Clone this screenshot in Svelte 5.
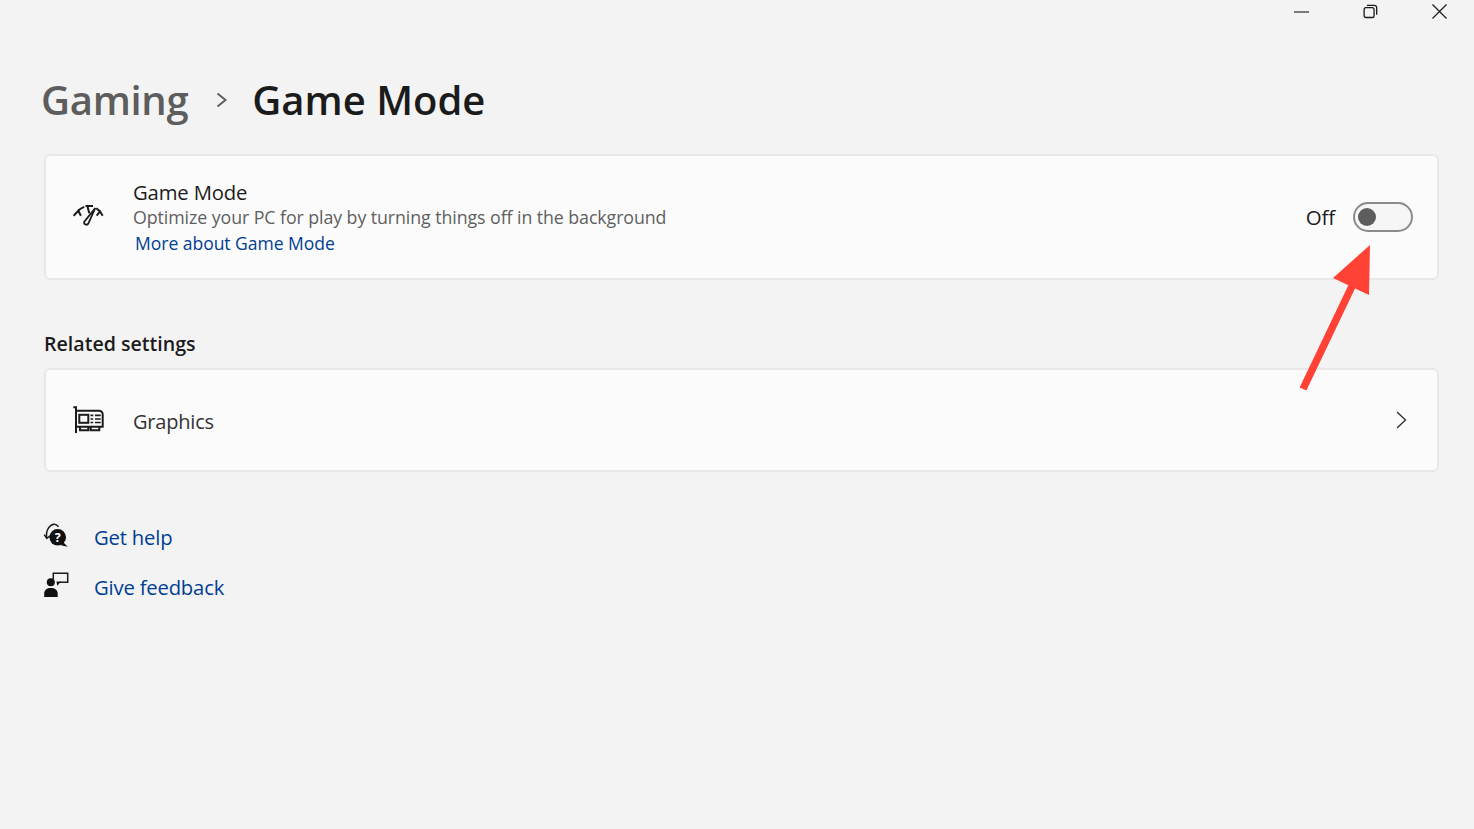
<script>
  const stroke = '#1b1b1b';
</script>

<div class="page">
  <div class="titlebar">
    <button class="win" aria-label="Minimize">
      <svg width="15" height="2" viewBox="0 0 16 2"><path d="M0 1H16" stroke={stroke} stroke-width="1.2"/></svg>
    </button>
    <button class="win" aria-label="Restore">
      <svg width="15" height="15" viewBox="0 0 16 16" fill="none" stroke={stroke} stroke-width="1.400"><rect x="1.200" y="3.800" width="10.600" height="10.600" rx="2"/><path d="M4.200 1.400H12a2.600 2.600 0 0 1 2.600 2.600V11.400"/></svg>
    </button>
    <button class="win" aria-label="Close">
      <svg width="15" height="15" viewBox="0 0 16 16" fill="none" stroke={stroke} stroke-width="1.300"><path d="M.5.5 15.500 15.500M15.500.5.5 15.500"/></svg>
    </button>
  </div>

  <header class="crumbs">
    <span class="parent">Gaming</span>
    <svg class="sep" width="11" height="16" viewBox="0 0 11 16" fill="none" stroke="#5d5d5d" stroke-width="2"><path d="M1.500 1.500 9.500 8 1.500 14.500"/></svg>
    <h1>Game Mode</h1>
  </header>

  <section class="card game">
    <svg class="icon" width="32" height="24" viewBox="0 0 32 24" fill="none" stroke={stroke} stroke-width="2">
      <path d="M.6 12.700 5.300 7.700 7.900 12.700"/>
      <path d="M5.300 7.500C7 5.800 9 4.700 11.300 3.900"/>
      <path d="M12.500 3H20"/>
      <path d="M14.500 3.400 16.300 10.300"/>
      <path d="M23.700 12.700 27 8.500 29.700 12.700"/>
      <path d="M23.300 5.200 27 8.500"/>
      <path d="M22.300 5 15.300 20.500A2.200 2.200 0 0 1 11.300 18.700Z" stroke-width="1.800"/>
    </svg>
    <div class="text">
      <div class="name">Game Mode</div>
      <div class="desc">Optimize your PC for play by turning things off in the background</div>
      <a class="more" href="#more">More about Game Mode</a>
    </div>
    <span class="state">Off</span>
    <span class="toggle"><span class="knob"></span></span>
  </section>

  <h2>Related settings</h2>

  <section class="card graphics">
    <svg class="icon" width="32" height="28" viewBox="0 0 32 28" fill="none" stroke={stroke} stroke-width="2">
      <path d="M.3 2.300H3V28"/>
      <path d="M3 5.700H26A3.700 3.700 0 0 1 29.700 9.400V21.700H3"/>
      <rect x="6.300" y="9.800" width="9" height="8"/>
      <path d="M7 21.700V25.300H15.300V21.700M17.700 21.700V25.300H26.300V21.700"/>
      <path d="M17.500 10.300H20.300M22 10.300H27.700M17.500 14H20.300M22 14H27.700M17.500 17.500H20.300M22 17.500H27.700" stroke-width="1.700"/>
    </svg>
    <span class="label">Graphics</span>
    <svg class="chev" width="11" height="18" viewBox="0 0 11 18" fill="none" stroke="#333" stroke-width="1.400"><path d="M1 1 9.500 9 1 17"/></svg>
  </section>

  <div class="links">
    <div class="link">
      <svg class="over" width="25" height="26" viewBox="0 0 25 26" fill="none">
        <path d="M2.700 14C1.500 6 6 .4 10 .2C12 .1 13.300 1 14.500 2.700" stroke={stroke} stroke-width="1.500"/>
        <path d="M.2 10.700 2.800 14.500 6 11.700" stroke={stroke} stroke-width="1.500"/>
        <circle cx="13.700" cy="13.300" r="8.300" fill="#111"/>
        <path d="M19 18 23.700 22.700 17 21.200Z" fill="#111"/>
        <text x="13.700" y="17.800" text-anchor="middle" class="q">?</text>
      </svg>
      <a href="#help">Get help</a>
    </div>
    <div class="link">
      <svg class="over" width="25" height="26" viewBox="0 0 25 26" fill="none">
        <circle cx="6.800" cy="8.300" r="4" fill="#111"/>
        <path d="M.2 23V19.500C.2 16 3 14 6.800 14C10.800 14 13.700 16 13.700 19.500V23Z" fill="#111"/>
        <path d="M9.300 5V-.7H23.700V8.300H16" stroke={stroke} stroke-width="1.500"/>
        <path d="M12.500 7.500H17L13.300 11.800Z" fill="#111"/>
      </svg>
      <a href="#feedback">Give feedback</a>
    </div>
  </div>

  <svg class="arrow" width="74" height="148" viewBox="0 0 74 148">
    <path d="M5 145 56 38" stroke="#ff4136" stroke-width="7.500" fill="none"/>
    <path d="M72 1 71 51 35 34Z" fill="#ff4136"/>
  </svg>
</div>

<style>
  :global(body) {
    margin: 0;
    background: #f3f3f3;
  }
  .page {
    position: relative;
    box-sizing: border-box;
    height: 829px;
    padding: 0 35px 0 44px;
    background: #f3f3f3;
    font-family: "Open Sans", "Noto Sans", sans-serif;
    color: #1b1b1b;
    overflow: hidden;
  }
  .titlebar {
    display: flex;
    justify-content: flex-end;
    gap: 53px;
    height: 23px;
    margin-right: -8px;
    align-items: center;
  }
  .win {
    display: flex;
    align-items: center;
    justify-content: center;
    width: 16px;
    height: 23px;
    padding: 0;
    border: 0;
    background: none;
  }
  .crumbs {
    display: flex;
    align-items: center;
    height: 54px;
    margin: 50px 0 27px -3px;
    font-size: 40px;
    font-weight: 600;
    line-height: 54px;
  }
  .parent {
    color: #5d5d5d;
    letter-spacing: -.3px;
  }
  .sep {
    margin: 0 0 0 28px;
  }
  h1 {
    margin: 0 0 0 25px;
    font: inherit;
    color: #1b1b1b;
  }
  .card {
    display: flex;
    align-items: center;
    box-sizing: border-box;
    background: #fbfbfb;
    border: 2px solid #e8e8e8;
    border-radius: 6px;
  }
  .game {
    height: 126px;
    padding: 0 24px 0 27px;
  }
  .icon {
    flex: none;
  }
  .game .icon {
    margin-right: 28px;
    margin-top: -4px;
  }
  .text {
    flex: 1;
  }
  .name {
    font-size: 20.300px;
    line-height: 26px;
    letter-spacing: -.15px;
  }
  .desc {
    font-size: 17.800px;
    line-height: 24px;
    color: #5f5f5f;
    letter-spacing: -.08px;
  }
  .more {
    display: block;
    margin: 1px 0 0 2px;
    font-size: 17.560px;
    line-height: 26px;
    letter-spacing: -.04px;
    color: #003e92;
    text-decoration: none;
  }
  .state {
    margin-right: 18px;
    font-size: 20.500px;
    letter-spacing: -.2px;
  }
  .toggle {
    display: flex;
    align-items: center;
    box-sizing: border-box;
    width: 60px;
    height: 30px;
    padding-left: 3px;
    background: #f6f6f6;
    border: 2px solid #8b8b8b;
    border-radius: 15px;
  }
  .knob {
    width: 18px;
    height: 18px;
    border-radius: 50%;
    background: #5d5d5d;
  }
  h2 {
    margin: 48px 0 8px;
    font-size: 19.600px;
    line-height: 32px;
    font-weight: 600;
  }
  .graphics {
    height: 104px;
    padding: 0 30px 0 27px;
  }
  .graphics .icon {
    margin-right: 28px;
    margin-top: -2px;
  }
  .label {
    flex: 1;
    font-size: 20px;
    line-height: 30px;
    letter-spacing: -.2px;
    margin-top: 4px;
    color: #333;
  }
  .links {
    display: flex;
    flex-direction: column;
    gap: 24px;
    margin-top: 52px;
  }
  .link {
    display: flex;
    align-items: center;
    gap: 25px;
    height: 26px;
  }
  .over {
    overflow: visible;
  }
  .link a {
    font-size: 20.300px;
    letter-spacing: -.2px;
    color: #003e92;
    text-decoration: none;
  }
  .q {
    font-size: 12.500px;
    font-weight: 700;
    fill: #fff;
    font-family: "Open Sans", sans-serif;
  }
  .arrow {
    position: absolute;
    left: 1298px;
    top: 244px;
  }
</style>
